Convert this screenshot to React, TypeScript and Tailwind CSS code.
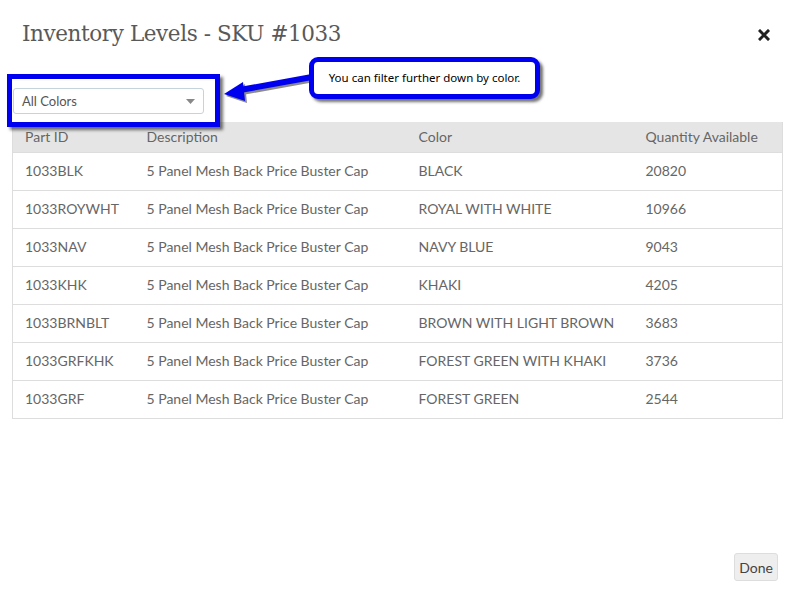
const rows = [
  { id: '1033BLK', desc: '5 Panel Mesh Back Price Buster Cap', color: 'BLACK', qty: '20820' },
  { id: '1033ROYWHT', desc: '5 Panel Mesh Back Price Buster Cap', color: 'ROYAL WITH WHITE', qty: '10966' },
  { id: '1033NAV', desc: '5 Panel Mesh Back Price Buster Cap', color: 'NAVY BLUE', qty: '9043' },
  { id: '1033KHK', desc: '5 Panel Mesh Back Price Buster Cap', color: 'KHAKI', qty: '4205' },
  { id: '1033BRNBLT', desc: '5 Panel Mesh Back Price Buster Cap', color: 'BROWN WITH LIGHT BROWN', qty: '3683' },
  { id: '1033GRFKHK', desc: '5 Panel Mesh Back Price Buster Cap', color: 'FOREST GREEN WITH KHAKI', qty: '3736' },
  { id: '1033GRF', desc: '5 Panel Mesh Back Price Buster Cap', color: 'FOREST GREEN', qty: '2544' },
]

function CloseIcon() {
  return (
    <svg width="12" height="12" viewBox="0 0 12 12">
      <path d="M2 2 L10 10 M10 2 L2 10" stroke="#222" strokeWidth="3" strokeLinecap="square" />
    </svg>
  )
}

export default function App() {
  return (
    <div className="relative w-[793px] h-[590px] bg-white flex flex-col overflow-hidden font-['Lato',sans-serif] text-[14px] text-[#666]">
      {/* header */}
      <div className="h-[68px] flex items-center justify-between pl-[22px] pr-[23px] pt-[1px] shrink-0">
        <h1 className="font-['DejaVu_Serif',serif] text-[21.5px] font-light text-[#595959] tracking-[-0.4px]">
          Inventory Levels - SKU #1033
        </h1>
        <CloseIcon />
      </div>

      {/* filter */}
      <div className="h-[54px] shrink-0 pt-[20px] pl-[13px]">
        <div className="w-[191px] h-[26px] border border-[#c5d3dc] rounded-[3px] flex items-center justify-between pl-[8px] pr-[8px] pt-[1px] text-[13px] text-[#555]">
          <span>All Colors</span>
          <svg width="9" height="5" viewBox="0 0 9 5">
            <path d="M0 0 L9 0 L4.5 5 Z" fill="#888" />
          </svg>
        </div>
      </div>

      {/* table */}
      <div className="mx-[12px] w-[771px]">
        <table className="w-full border-collapse table-fixed">
          <colgroup>
            <col className="w-[122px]" />
            <col className="w-[272px]" />
            <col className="w-[227px]" />
            <col />
          </colgroup>
          <thead>
            <tr className="bg-[#e5e5e5] h-[30px]">
              <th className="text-left font-normal pl-[12px] border-l border-[#ddd]">Part ID</th>
              <th className="text-left font-normal pl-[12px]">Description</th>
              <th className="text-left font-normal pl-[12px]">Color</th>
              <th className="text-left font-normal pl-[12px] border-r border-[#ddd]">Quantity Available</th>
            </tr>
          </thead>
          <tbody>
            {rows.map((r) => (
              <tr key={r.id} className="h-[38px] border border-[#ddd]">
                <td className="pl-[12px] pb-[1px]">{r.id}</td>
                <td className="pl-[12px] pb-[1px]">{r.desc}</td>
                <td className="pl-[12px] pb-[1px]">{r.color}</td>
                <td className="pl-[12px] pb-[1px]">{r.qty}</td>
              </tr>
            ))}
          </tbody>
        </table>
      </div>

      {/* footer */}
      <div className="mt-auto flex justify-end pr-[15px] pb-[9px]">
        <button className="h-[28px] px-[4px] bg-[#eee] border border-[#ddd] rounded-[3px] text-[14px] text-[#444]">
          Done
        </button>
      </div>

      {/* annotation: highlight box */}
      <div className="absolute left-[7px] top-[74px] w-[213px] h-[53px] border-[5px] border-[#0000f0] shadow-[3px_3px_3px_rgba(0,0,0,0.55)]" />

      {/* annotation: arrow */}
      <svg className="absolute left-[215px] top-[70px]" width="110" height="40" viewBox="215 70 110 40">
        <g transform="translate(2 2)" opacity="0.45">
          <path d="M240 90 L312 77" stroke="#000" strokeWidth="6" />
          <path d="M224 94 L243 82 L245 101 Z" fill="#000" />
        </g>
        <path d="M240 90 L312 77" stroke="#0000f0" strokeWidth="6" />
        <path d="M224 94 L243 82 L245 101 Z" fill="#0000f0" />
      </svg>

      {/* annotation: callout */}
      <div className="absolute left-[309px] top-[57px] w-[231px] h-[42px] rounded-[9px] border-[5px] border-[#0000f0] bg-white shadow-[3px_3px_3px_rgba(0,0,0,0.55)] flex items-center justify-center font-['Noto_Sans',sans-serif] text-[11.5px] text-black">
        You can filter further down by color.
      </div>
    </div>
  )
}
